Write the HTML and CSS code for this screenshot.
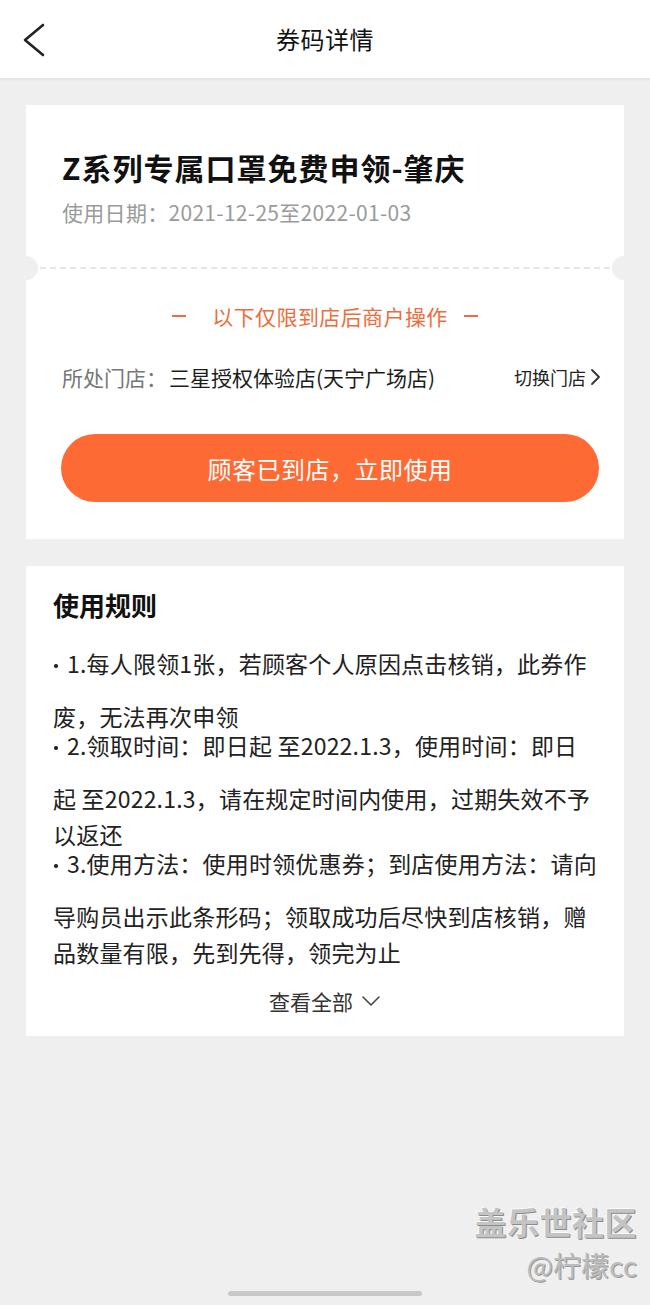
FILE: index.html
```html
<!DOCTYPE html>
<html lang="zh-CN">
<head>
    <meta charset="UTF-8">
    <meta name="viewport" content="width=device-width, initial-scale=1.0">
    <title>券码详情</title>
    <link rel="stylesheet" href="styles.css">
</head>
<body>

<header class="topbar">
    <a class="back" href="#back">
        <svg width="26" height="34" viewBox="0 0 26 34">
            <polyline points="23,2 5,17 23,32" fill="none" stroke="#222" stroke-width="2.6" stroke-linecap="round" stroke-linejoin="round"/>
        </svg>
    </a>
    <h1>券码详情</h1>
    <span></span>
</header>

<main class="page">
    <section class="card coupon">
        <div class="coupon-top">
            <h2>Z系列专属口罩免费申领-肇庆</h2>
            <p class="date">使用日期：2021-12-25至2022-01-03</p>
        </div>
        <div class="cut"></div>
        <div class="coupon-bottom">
            <div class="notice">
                <span class="dash dash-left"></span>
                <span>以下仅限到店后商户操作</span>
                <span class="dash dash-right"></span>
            </div>
            <div class="store">
                <span class="label">所处门店：</span>
                <span class="name">三星授权体验店(天宁广场店)</span>
                <a class="switch" href="#switch">切换门店
                    <svg width="12" height="18" viewBox="0 0 12 18">
                        <polyline points="2,2 9,9 2,16" fill="none" stroke="#333" stroke-width="1.8" stroke-linecap="round" stroke-linejoin="round"/>
                    </svg>
                </a>
            </div>
            <button class="use-btn">顾客已到店，立即使用</button>
        </div>
    </section>

    <section class="card rules">
        <h3>使用规则</h3>
        <ul>
            <li><span class="dot"></span>1.每人限领1张，若顾客个人原因点击核销，此券作<br>废，无法再次申领</li>
            <li><span class="dot"></span>2.领取时间：即日起 至2022.1.3，使用时间：即日<br>起 至2022.1.3，请在规定时间内使用，过期失效不予<br>以返还</li>
            <li><span class="dot"></span>3.使用方法：使用时领优惠券；到店使用方法：请向<br>导购员出示此条形码；领取成功后尽快到店核销，赠<br>品数量有限，先到先得，领完为止</li>
        </ul>
        <a class="more" href="#more">查看全部
            <svg width="20" height="12" viewBox="0 0 20 12">
                <polyline points="2,2 10,10 18,2" fill="none" stroke="#444" stroke-width="1.6" stroke-linecap="round" stroke-linejoin="round"/>
            </svg>
        </a>
    </section>
</main>

<div class="watermark">
    <div class="wm-big">盖乐世社区</div>
    <div class="wm-small">@柠檬cc</div>
</div>
<div class="home-bar"></div>

</body>
</html>
```

FILE: styles.css
```css
body {
    font-family: "Noto Sans CJK SC", "Noto Sans", sans-serif;
    margin: 0;
    padding: 0;
    background-color: #efefef;
    color: #222;
    min-height: 1305px;
    position: relative;
}
.topbar {
    display: grid;
    grid-template-columns: 1fr auto 1fr;
    align-items: center;
    height: 78px;
    background-color: #fff;
    border-bottom: 1px solid #e3e3e3;
    box-shadow: 0 1px 2px rgba(0, 0, 0, 0.05);
}
.topbar .back {
    display: block;
    width: 26px;
    height: 34px;
    margin-left: 20px;
    margin-top: 2px;
}
.topbar h1 {
    margin: 0;
    font-size: 24px;
    font-weight: 400;
    color: #111;
    line-height: 30px;
    letter-spacing: 0.5px;
}
.page {
    padding: 26px 26px 0;
}
.card {
    background-color: #fff;
}
.coupon-top {
    padding: 42px 36px 40px;
}
.coupon-top h2 {
    margin: 0;
    font-size: 30px;
    line-height: 40px;
    font-weight: 700;
    color: #111;
    letter-spacing: 1px;
}
.date {
    margin: 10px 0 0;
    font-size: 21px;
    line-height: 30px;
    color: #9a9a9a;
    letter-spacing: 0.3px;
}
.cut {
    position: relative;
    height: 0;
    margin: 0 14px;
    border-top: 2px dashed #e6e6e6;
}
.cut::before, .cut::after {
    content: "";
    position: absolute;
    top: -13px;
    width: 24px;
    height: 24px;
    border-radius: 50%;
    background-color: #efefef;
}
.cut::before {
    left: -26px;
}
.cut::after {
    right: -26px;
}
.coupon-bottom {
    padding: 32px 22px 37px 35px;
}
.notice {
    display: flex;
    justify-content: center;
    align-items: center;
    font-size: 21px;
    line-height: 30px;
    color: #ec6e3c;
    margin-left: -13px;
    letter-spacing: 0.4px;
}
.dash {
    display: block;
    width: 14px;
    height: 2px;
    background-color: #ec6e3c;
}
.dash-left {
    margin-right: 26px;
}
.dash-right {
    margin-left: 16px;
}
.store {
    display: flex;
    align-items: center;
    margin-top: 31px;
    margin-left: 1px;
    font-size: 21px;
    line-height: 30px;
}
.store .label {
    color: #777;
}
.store .name {
    color: #1d1d1d;
    margin-left: 2px;
}
.switch {
    margin-left: auto;
    display: flex;
    align-items: center;
    gap: 4px;
    font-size: 18px;
    color: #222;
    text-decoration: none;
}
.use-btn {
    display: block;
    width: calc(100% - 3px);
    height: 68px;
    margin-top: 42px;
    border: none;
    border-radius: 34px;
    background-color: #fe6a34;
    color: #fff;
    font-family: inherit;
    font-size: 24px;
    letter-spacing: 0.5px;
    cursor: pointer;
}
.rules {
    margin-top: 27px;
    padding: 21px 27px 20px 27px;
}
.rules h3 {
    margin: 0;
    font-size: 26px;
    line-height: 36px;
    font-weight: 700;
    color: #111;
}
.rules ul {
    list-style: none;
    margin: 22px 0 0;
    padding: 0;
    font-size: 23px;
    line-height: 36px;
    color: #222;
    letter-spacing: 0.2px;
}
.rules li + li {
    margin-top: -7px;
}
.dot {
    display: inline-block;
    width: 14px;
    height: 53px;
    vertical-align: top;
}
.dot::before {
    content: "";
    display: block;
    width: 3.5px;
    height: 3.5px;
    margin: 19px 0 0 1px;
    border-radius: 50%;
    background-color: #222;
}
.more {
    display: flex;
    justify-content: center;
    align-items: center;
    gap: 8px;
    margin-top: 16px;
    font-size: 21px;
    line-height: 30px;
    color: #333;
    text-decoration: none;
}
.watermark {
    position: absolute;
    right: 13px;
    top: 1199px;
    text-align: right;
    color: #c4c4c4;
}
.wm-big {
    font-size: 32px;
    line-height: 44px;
    font-weight: 700;
    letter-spacing: 0.5px;
    text-shadow: 1px 1px 0 #8c8c8c, -1px -1px 0 #fafafa;
}
.wm-small {
    font-size: 28px;
    line-height: 44px;
    color: #bdbdbd;
    text-shadow: 1px 1px 0 #999;
}
.home-bar {
    position: absolute;
    left: 228px;
    top: 1291px;
    width: 194px;
    height: 5px;
    border-radius: 3px;
    background-color: #c8c8c8;
}
```
